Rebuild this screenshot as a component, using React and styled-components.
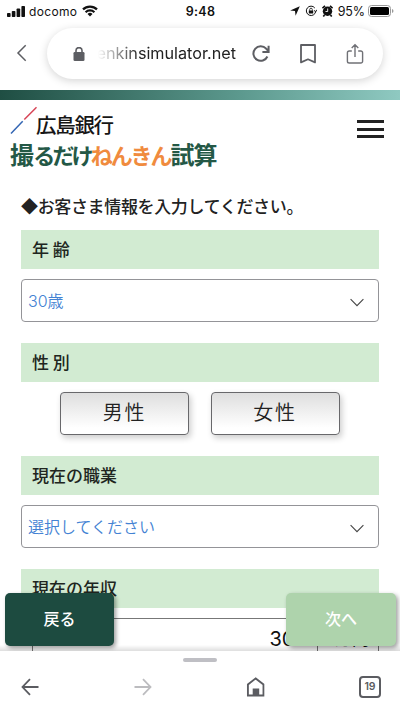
import React from "react";
import styled, { createGlobalStyle } from "styled-components";

const Global = createGlobalStyle`
  * { box-sizing: border-box; }
  body { margin: 0; background: #fff; }
  button { font: inherit; margin: 0; padding: 0; border: 0; background: none; }
  svg { display: block; flex: none; }
`;

const Screen = styled.div`
  width: 400px;
  height: 711px;
  overflow: hidden;
  display: flex;
  flex-direction: column;
  background: #fff;
  color: #222;
  font-family: "Inter", "Noto Sans CJK JP", sans-serif;
`;

const StatusBar = styled.div`
  height: 22px;
  flex: none;
  display: grid;
  grid-template-columns: 1fr auto 1fr;
  align-items: center;
  padding: 0 6px 0 7px;
  color: #111;
  font-size: 12px;
`;
const StatusGroup = styled.div`
  display: flex;
  align-items: center;
  gap: ${(p) => p.$gap}px;
  justify-content: ${(p) => (p.$end ? "flex-end" : "flex-start")};
`;
const Carrier = styled.span`
  font-size: 12px;
  letter-spacing: 0.35px;
  margin-left: -1px;
`;
const Clock = styled.span`
  font-size: 12.5px;
  font-weight: 600;
  letter-spacing: 0.3px;
`;
const Percent = styled.span`
  font-size: 12.5px;
  letter-spacing: -0.1px;
  margin-right: -2px;
`;

const BrowserBar = styled.div`
  height: 68px;
  flex: none;
  display: flex;
  align-items: flex-start;
  padding: 6px 17px 0 16px;
`;
const BackSlot = styled.button`
  width: 31px;
  height: 50px;
  display: flex;
  align-items: center;
`;
const AddressPill = styled.div`
  width: 336px;
  height: 51px;
  border-radius: 26px;
  background: #fff;
  box-shadow: 0 2px 8px rgba(0, 0, 0, 0.17);
  display: flex;
  align-items: center;
  padding-left: 26px;
`;
const Address = styled.div`
  width: 138px;
  margin: 0 16px 0 13px;
  overflow: hidden;
  display: flex;
  justify-content: flex-end;
  white-space: nowrap;
  font-size: 16.2px;
  line-height: 24px;
  padding-bottom: 1px;
  color: #222;
  mask-image: linear-gradient(90deg, transparent 0, #000 42px);
`;
const PillIcons = styled.div`
  display: flex;
  align-items: center;
  gap: 30px;
`;

const Page = styled.main`
  height: 561px;
  flex: none;
  overflow: hidden;
  position: relative;
`;
const Stripe = styled.div`
  height: 10px;
  background: linear-gradient(90deg, #1f4e43, #5c998e 60%, #8fc9c1);
`;
const SiteHeader = styled.header`
  height: 93px;
  display: flex;
  justify-content: space-between;
  padding: 6px 16px 0 10px;
`;
const Brand = styled.div`
  display: flex;
  flex-direction: column;
`;
const BankRow = styled.div`
  display: flex;
  height: 31px;
`;
const BankName = styled.div`
  font: 500 20.5px/36px "Noto Sans CJK JP", sans-serif;
  letter-spacing: -1.3px;
  color: #161616;
  margin-left: -2px;
`;
const ServiceName = styled.div`
  font: 700 24px/34px "Noto Sans CJK JP", sans-serif;
  letter-spacing: -0.8px;
  color: #245846;
  white-space: nowrap;
`;
const Kana = styled.span`
  font-size: 22px;
  letter-spacing: ${(p) => (p.$orange ? -2.1 : -2.8)}px;
  color: ${(p) => (p.$orange ? "#f08b3e" : "#245846")};
`;
const MenuButton = styled.button`
  width: 27px;
  height: 18px;
  margin-top: 14px;
  display: flex;
  flex-direction: column;
  justify-content: space-between;
`;
const MenuLine = styled.span`
  width: 27px;
  height: 3px;
  background: #222;
`;

const Form = styled.section`
  padding: 0 21px;
`;
const Intro = styled.h1`
  margin: 0;
  height: 37px;
  font: 500 17px/26px "Noto Sans CJK JP", sans-serif;
  letter-spacing: -0.35px;
  color: #222;
`;
const Label = styled.h2`
  margin: 0;
  width: 358px;
  height: 39px;
  padding-left: 11px;
  background: #d2ebd2;
  font: 500 17px/38px "Noto Sans CJK JP", sans-serif;
  color: #202520;
`;
const FieldArea = styled.div`
  height: 74px;
  padding-top: 10px;
`;
const Select = styled.div`
  width: 358px;
  height: 43px;
  border: 1px solid #949498;
  border-radius: 4px;
  display: flex;
  align-items: center;
  justify-content: space-between;
  padding: 0 14px 1px 6px;
  font-family: "Inter", "Noto Sans CJK JP", sans-serif;
  font-size: 16px;
  font-weight: 350;
  color: #4382d3;
`;
const ButtonPair = styled.div`
  height: 74px;
  padding: 10px 0 0 39px;
  display: flex;
  gap: 21.5px;
`;
const GenderButton = styled.button`
  width: 129px;
  height: 43px;
  border: 1px solid #68686b;
  border-radius: 4px;
  background: linear-gradient(#dedede, #fff 85%);
  box-shadow: 2px 3px 6px rgba(0, 0, 0, 0.2);
  font: 350 20px/38px "Noto Sans CJK JP", sans-serif;
  letter-spacing: 1.8px;
  padding-bottom: 3px;
  color: #222;
`;
const IncomeBox = styled.div`
  width: 347px;
  height: 43px;
  margin: 10px 0 0 11px;
  border: 1px solid #777;
  display: flex;
  color: #111;
  font: 400 20px/40px "Inter", "Noto Sans CJK JP", sans-serif;
`;
const IncomeValue = styled.div`
  width: 285px;
  flex: none;
  padding-right: 10px;
  text-align: right;
  border-right: 1px solid #777;
`;
const IncomeUnit = styled.div`
  padding: 7px 0 0 17px;
  font: 400 17px/24px "Noto Sans CJK JP", sans-serif;
  white-space: nowrap;
`;

/* Navigation buttons float over the scrolling form. */
const FloatingNav = styled.div`
  position: absolute;
  left: 0;
  right: 0;
  bottom: 0;
  height: 58px;
  padding: 0 4px 0 5px;
  display: flex;
  justify-content: space-between;
  align-items: flex-start;
  background: linear-gradient(transparent 52px, rgba(0, 0, 0, 0.13));
`;
const NavButton = styled.button`
  width: ${(p) => (p.$next ? 110 : 109)}px;
  height: 53px;
  border-radius: 5px;
  background: ${(p) => (p.$next ? "#aed3ac" : "#1d4b40")};
  box-shadow: 2px 2px 4px rgba(0, 0, 0, 0.38);
  color: #fff;
  font: 500 16px/48px "Noto Sans CJK JP", sans-serif;
  padding-bottom: 3px;
`;

const BottomBar = styled.footer`
  height: 60px;
  flex: none;
  background: #fff;
  display: flex;
  flex-direction: column;
  align-items: center;
  padding-top: 7px;
`;
const Handle = styled.div`
  width: 34px;
  height: 4px;
  border-radius: 2px;
  background: #bfbfc4;
`;
const Tools = styled.nav`
  width: 360px;
  margin: 14px 0 0 2px;
  display: flex;
  align-items: center;
  justify-content: space-between;
`;
const Tabs = styled.div`
  width: 22px;
  height: 22px;
  border: 2px solid #5b5c61;
  border-radius: 4px;
  color: #5b5c61;
  font: 600 10.5px/18px "Inter", sans-serif;
  letter-spacing: -0.1px;
  text-align: center;
`;

const Signal = () => (
  <svg width="18" height="11" viewBox="0 0 18 11" fill="#111">
    <rect x="0" y="7" width="3.6" height="4" rx=".8" />
    <rect x="4.8" y="5" width="3.6" height="6" rx=".8" />
    <rect x="9.6" y="2.5" width="3.6" height="8.5" rx=".8" />
    <rect x="14.4" y="0" width="3.6" height="11" rx=".8" />
  </svg>
);
const Wifi = () => (
  <svg width="16" height="12" viewBox="0 0 16 12" fill="none" stroke="#111" strokeWidth="2.2">
    <path d="M1 4.4a10 10 0 0 1 14 0M3.6 7.2a6.3 6.3 0 0 1 8.8 0" />
    <path d="M8 11.5 5.5 9a3.6 3.6 0 0 1 5 0Z" fill="#111" stroke="none" />
  </svg>
);
const Location = () => (
  <svg width="10" height="10" viewBox="0 0 10 10" fill="#111"><path d="M9.8.2 5.6 9.8 5 5 .2 4.4Z" /></svg>
);
const RotationLock = () => (
  <svg width="12" height="12" viewBox="0 0 12 12" fill="none" stroke="#111">
    <path d="M9.8 3A4.7 4.7 0 1 0 10.7 6.5M11.7 4.8l-1 2-1.7-1.4" />
    <path d="M4.7 5.8V4.5a1.3 1.3 0 0 1 2.6 0v1.3" strokeWidth=".8" />
    <rect x="3.8" y="5.5" width="4.4" height="3" fill="#111" stroke="none" />
  </svg>
);
const Alarm = () => (
  <svg width="11" height="12" viewBox="0 0 11 12" fill="#111">
    <circle cx="5.5" cy="6.3" r="4.7" />
    <path d="M.4 3.2 3 .8M10.6 3.2 8 .8M2.5 10 1.3 11.5M8.5 10l1.2 1.5" stroke="#111" strokeWidth="1.7" />
    <path d="M5.7 3.5v3H3.5" fill="none" stroke="#fff" strokeWidth=".9" />
  </svg>
);
const Battery = () => (
  <svg width="26" height="12" viewBox="0 0 26 12">
    <rect x=".5" y=".5" width="22" height="11" rx="3" fill="none" stroke="#999" />
    <rect x="2" y="2" width="19" height="8" rx="1.5" fill="#000" />
    <path d="M24 4q1.5.5 1.5 2T24 8Z" fill="#999" />
  </svg>
);
const Lock = () => (
  <svg width="12" height="14" viewBox="0 0 12 14">
    <rect x=".5" y="5" width="11" height="9" rx="1.3" fill="#5d5e63" />
    <path d="M3 6V3.6a3 3 0 0 1 6 0V6" fill="none" stroke="#5d5e63" strokeWidth="1.6" />
  </svg>
);
const Reload = () => (
  <svg width="18" height="18" viewBox="0 0 18 18" fill="none" stroke="#5d5e63" strokeWidth="2">
    <path d="M15.4 11.5A7.3 7.3 0 1 1 14.2 3.7L16.5 6M16.6.7v6.2h-6.2" />
  </svg>
);
const Bookmark = () => (
  <svg width="16" height="20" viewBox="0 0 16 20" fill="none" stroke="#5d5e63" strokeWidth="1.8">
    <path d="M1 1h14v17.4l-7-3.1-7 3.1Z" strokeLinejoin="round" />
  </svg>
);
const Share = () => (
  <svg width="18" height="22" viewBox="0 0 18 22" fill="none" stroke="#707176" strokeWidth="1.4">
    <path d="M5.8 8H3.2A1.8 1.8 0 0 0 1.4 9.8v8.4A1.8 1.8 0 0 0 3.2 20h11.6a1.8 1.8 0 0 0 1.8-1.8V9.8A1.8 1.8 0 0 0 14.8 8h-2.6M9 14V1.8M5.7 5 9 1.7 12.3 5" />
  </svg>
);
const Arrow = ({ forward }) => (
  <svg width="18" height="18" viewBox="0 0 18 18" fill="none" stroke={forward ? "#bcbcbf" : "#5b5c61"} strokeWidth="1.8">
    <path d={forward ? "M.5 9h16M9 1.2 16.5 9 9 16.8" : "M17.5 9h-16M9 1.2 1.5 9 9 16.8"} />
  </svg>
);
const Home = () => (
  <svg width="18" height="20" viewBox="0 0 18 20" transform="translate(.7 0)">
    <path d="M1.2 18.5V7.5L9 1.4l7.8 6.1v11Z" fill="none" stroke="#5b5c61" strokeWidth="1.9" />
    <path d="M6 11.5h6.5V19H6Z" fill="#5b5c61" />
  </svg>
);
const BankMark = () => (
  <svg width="28" height="30" viewBox="0 0 28 30" fill="none" strokeWidth="1.5">
    <path d="M1 27.5 12.7 15.3" stroke="#3265b3" />
    <path d="M14.3 13.5 26.5 1.3" stroke="#d74456" />
  </svg>
);
const Chevron = () => (
  <svg width="14" height="9" viewBox="0 0 14 9" fill="none" stroke="#444" strokeWidth="1.1" transform="translate(0 2)">
    <path d="m.6 1.2 6.4 6.4 6.4-6.4" />
  </svg>
);

export default function App() {
  return (
    <>
      <Global />
      <Screen>
        <StatusBar>
          <StatusGroup $gap={5}>
            <Signal />
            <Carrier>docomo</Carrier>
            <Wifi />
          </StatusGroup>
          <Clock>9:48</Clock>
          <StatusGroup $gap={5} $end>
            <Location />
            <RotationLock />
            <Alarm />
            <Percent>95%</Percent>
            <Battery />
          </StatusGroup>
        </StatusBar>
        <BrowserBar>
          <BackSlot aria-label="Back">
            <svg width="11" height="18" viewBox="0 0 11 18" fill="none" stroke="#5d5e63" strokeWidth="1.5">
              <path d="M9.7 1.3 2 9l7.7 7.7" />
            </svg>
          </BackSlot>
          <AddressPill>
            <Lock />
            <Address>enkinsimulator.net</Address>
            <PillIcons>
              <Reload />
              <Bookmark />
              <Share />
            </PillIcons>
          </AddressPill>
        </BrowserBar>
        <Page>
          <Stripe />
          <SiteHeader>
            <Brand>
              <BankRow>
                <BankMark />
                <BankName>広島銀行</BankName>
              </BankRow>
              <ServiceName>
                撮<Kana>るだけ</Kana><Kana $orange>ねんきん</Kana>試算
              </ServiceName>
            </Brand>
            <MenuButton aria-label="Menu">
              <MenuLine /><MenuLine /><MenuLine />
            </MenuButton>
          </SiteHeader>
          <Form>
            <Intro>◆お客さま情報を入力してください。</Intro>
            <Label>年 齢</Label>
            <FieldArea><Select>30歳<Chevron /></Select></FieldArea>
            <Label>性 別</Label>
            <ButtonPair>
              <GenderButton>男性</GenderButton>
              <GenderButton>女性</GenderButton>
            </ButtonPair>
            <Label>現在の職業</Label>
            <FieldArea><Select>選択してください<Chevron /></Select></FieldArea>
            <Label>現在の年収</Label>
            <IncomeBox>
              <IncomeValue>300</IncomeValue>
              <IncomeUnit>万円</IncomeUnit>
            </IncomeBox>
          </Form>
          <FloatingNav>
            <NavButton>戻る</NavButton>
            <NavButton $next>次へ</NavButton>
          </FloatingNav>
        </Page>
        <BottomBar>
          <Handle />
          <Tools>
            <Arrow />
            <Arrow forward />
            <Home />
            <Tabs>19</Tabs>
          </Tools>
        </BottomBar>
      </Screen>
    </>
  );
}
